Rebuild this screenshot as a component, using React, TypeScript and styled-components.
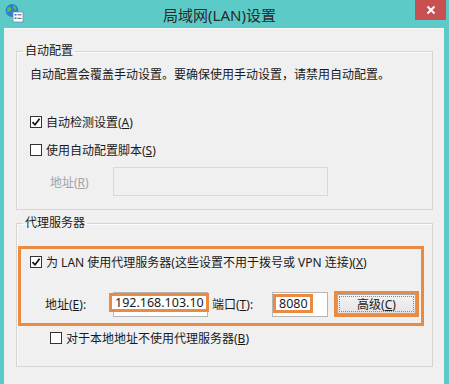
import React from 'react';
import styled, {createGlobalStyle} from 'styled-components';

const GlobalStyle = createGlobalStyle`
  html, body {
    margin: 0;
    padding: 0;
    background: #5ccbc8;
  }
  body {
    font-family: "Noto Sans", "Noto Sans CJK SC", sans-serif;
    font-size: 12px;
    color: #1a1a1a;
  }
`;

const ORANGE = '#e98b42';

const Window = styled.div`
  width: 449px;
  height: 384px;
  background: #5ccbc8;
  display: flex;
  flex-direction: column;
  overflow: hidden;
`;

const TitleBar = styled.div`
  height: 28px;
  display: flex;
  align-items: flex-start;
  flex-shrink: 0;
`;

const AppIcon = styled.div`
  width: 20px;
  height: 20px;
  margin: 3px 0 0 4px;
`;

const Title = styled.div`
  flex: 1;
  text-align: center;
  font-size: 15px;
  line-height: 20px;
  padding-top: 5px;
  color: #2a2a2a;
`;

const CloseButton = styled.div`
  width: 31px;
  height: 20px;
  margin-right: 3px;
  background: #c75050;
  display: flex;
  align-items: center;
  justify-content: center;
`;

const Content = styled.div`
  flex: 1;
  margin: 0 5px 0 4px;
  background: #f0f0f0;
  border-top: 1px solid #f7f7f7;
  padding: 15px 11px 0 12px;
`;

const Group = styled.fieldset<{$gapTop?: number}>`
  margin: ${p => p.$gapTop ?? 0}px 0 0 0;
  padding: 0;
  border: 1px solid #d5d5d5;
  box-shadow: inset 1px 1px 0 #fbfbfb;
  min-width: 0;
`;

const Legend = styled.legend`
  margin-left: 6px;
  padding: 0 2px;
  font-size: 12px;
  line-height: 14px;
`;

const GroupBody = styled.div<{$pad: string}>`
  padding: ${p => p.$pad};
  display: flex;
  flex-direction: column;
`;

const Text = styled.div`
  line-height: 16px;
  white-space: nowrap;
`;

const CheckRow = styled.label<{$top: number; $left?: number}>`
  display: flex;
  align-items: center;
  gap: 4px;
  height: 16px;
  margin-top: ${p => p.$top}px;
  margin-left: ${p => p.$left ?? 0}px;
  white-space: nowrap;
`;

const Box = styled.span`
  width: 12px;
  height: 12px;
  box-sizing: border-box;
  border: 1px solid #333;
  background: #fff;
  display: flex;
  align-items: center;
  justify-content: center;
`;

const FieldRow = styled.div<{$top: number; $left: number}>`
  display: flex;
  align-items: center;
  margin-top: ${p => p.$top}px;
  margin-left: ${p => p.$left}px;
`;

const Label = styled.span<{$width: number; $gap?: number; $disabled?: boolean}>`
  width: ${p => p.$width}px;
  margin-left: ${p => p.$gap ?? 0}px;
  flex-shrink: 0;
  white-space: nowrap;
  color: ${p => (p.$disabled ? '#a3a3a3' : 'inherit')};
`;

const Field = styled.div<{$width: number; $height: number; $disabled?: boolean}>`
  width: ${p => p.$width}px;
  height: ${p => p.$height}px;
  box-sizing: border-box;
  border: 1px solid ${p => (p.$disabled ? '#d9d9d9' : '#b5b5b5')};
  background: ${p => (p.$disabled ? '#f0f0f0' : '#fff')};
  display: flex;
  align-items: flex-start;
  flex-shrink: 0;
`;

const Mark = styled.span<{$shift: number; $top: number}>`
  border: 3px solid ${ORANGE};
  margin: ${p => p.$top}px 0 0 ${p => p.$shift}px;
  padding: 0 2px 0 3px;
  line-height: 13px;
  font-size: 12.5px;
  background: #fff;
  white-space: nowrap;
`;

const Highlight = styled.div`
  border: 3px solid ${ORANGE};
  margin: 16px 8px 0 1px;
  padding: 5px 0 6px 0;
  display: flex;
  flex-direction: column;
`;

const ButtonMark = styled.div`
  margin-left: 6px;
  border: 3px solid ${ORANGE};
  width: 85px;
  height: 26px;
  box-sizing: border-box;
  display: flex;
`;

const Button = styled.div`
  flex: 1;
  background: linear-gradient(#f4f4f4, #e4e4e4);
  border: 1px solid #a8a8a8;
  display: flex;
  align-items: center;
  justify-content: center;
  outline: 1px dotted #8a8a8a;
  outline-offset: -3px;
`;

const Check = () => (
  <svg width="10" height="10" viewBox="0 0 10 10">
    <path d="M1.5 5.2 L4 7.8 L8.6 1.8" fill="none" stroke="#111" strokeWidth="1.7" />
  </svg>
);

export default function App() {
  return (
    <>
      <GlobalStyle />
      <Window>
        <TitleBar>
          <AppIcon>
            <svg width="20" height="20" viewBox="0 0 20 20">
              <circle cx="8" cy="7.5" r="6.5" fill="#2f7fd0" />
              <path d="M3.5 4.5 C6 3 8 5 7 7 C6 9 4 8 3 10 Z" fill="#5dbb46" />
              <path d="M9 2 C11 3 13 5 12 7 C10 7 9 5 9 2 Z" fill="#5dbb46" />
              <rect x="9" y="9" width="10" height="10" fill="#fff" stroke="#6f8fb0" strokeWidth="0.8" />
              <rect x="10.5" y="11" width="2" height="1.5" fill="#2f6fb8" />
              <rect x="13.5" y="11.3" width="4" height="1" fill="#555" />
              <rect x="10.5" y="14.5" width="2" height="1.5" fill="#2f6fb8" />
              <rect x="13.5" y="14.8" width="4" height="1" fill="#555" />
            </svg>
          </AppIcon>
          <Title>局域网(LAN)设置</Title>
          <CloseButton>
            <svg width="10" height="10" viewBox="0 0 10 10">
              <path d="M1.5 1.5 L8.5 8.5 M8.5 1.5 L1.5 8.5" stroke="#fff" strokeWidth="2" />
            </svg>
          </CloseButton>
        </TitleBar>
        <Content>
          <Group>
            <Legend>自动配置</Legend>
            <GroupBody $pad="9px 0 13px 13px">
              <Text>自动配置会覆盖手动设置。要确保使用手动设置，请禁用自动配置。</Text>
              <CheckRow $top={31}>
                <Box><Check /></Box>
                <span>自动检测设置(<u>A</u>)</span>
              </CheckRow>
              <CheckRow $top={12}>
                <Box />
                <span>使用自动配置脚本(<u>S</u>)</span>
              </CheckRow>
              <FieldRow $top={9} $left={20}>
                <Label $width={63} $disabled>地址(<u>R</u>)</Label>
                <Field $width={215} $height={29} $disabled />
              </FieldRow>
            </GroupBody>
          </Group>
          <Group $gapTop={6}>
            <Legend>代理服务器</Legend>
            <GroupBody $pad="0 0 20px 0">
              <Highlight>
                <CheckRow $top={0} $left={9}>
                  <Box><Check /></Box>
                  <span>为 LAN 使用代理服务器(这些设置不用于拨号或 VPN 连接)(<u>X</u>)</span>
                </CheckRow>
                <FieldRow $top={21} $left={24}>
                  <Label $width={68}>地址(<u>E</u>):</Label>
                  <Field $width={95} $height={25}>
                    <Mark $shift={-5} $top={0}>192.168.103.10</Mark>
                  </Field>
                  <Label $width={60} $gap={4}>端口(<u>T</u>):</Label>
                  <Field $width={56} $height={25}>
                    <Mark $shift={0} $top={1}>8080</Mark>
                  </Field>
                  <ButtonMark>
                    <Button>高级(<u>C</u>)</Button>
                  </ButtonMark>
                </FieldRow>
              </Highlight>
              <CheckRow $top={4} $left={33}>
                <Box />
                <span>对于本地地址不使用代理服务器(<u>B</u>)</span>
              </CheckRow>
            </GroupBody>
          </Group>
        </Content>
      </Window>
    </>
  );
}
